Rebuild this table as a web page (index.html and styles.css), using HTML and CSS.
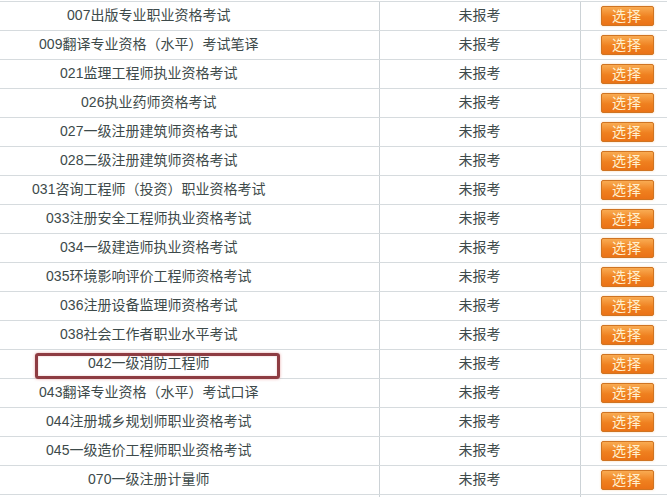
FILE: index.html
```html
<!DOCTYPE html>
<html lang="zh-CN">
<head>
<meta charset="utf-8">
<title>考试列表</title>
<link rel="stylesheet" href="styles.css">
</head>
<body>
<div class="viewport">
<table class="exam-table">
<colgroup><col class="c-name"><col class="c-status"><col class="c-act"></colgroup>
<tbody>
<tr><td>007出版专业职业资格考试</td><td>未报考</td><td><span class="btn">选择</span></td></tr>
<tr><td>009翻译专业资格（水平）考试笔译</td><td>未报考</td><td><span class="btn">选择</span></td></tr>
<tr><td>021监理工程师执业资格考试</td><td>未报考</td><td><span class="btn">选择</span></td></tr>
<tr><td>026执业药师资格考试</td><td>未报考</td><td><span class="btn">选择</span></td></tr>
<tr><td>027一级注册建筑师资格考试</td><td>未报考</td><td><span class="btn">选择</span></td></tr>
<tr><td>028二级注册建筑师资格考试</td><td>未报考</td><td><span class="btn">选择</span></td></tr>
<tr><td>031咨询工程师（投资）职业资格考试</td><td>未报考</td><td><span class="btn">选择</span></td></tr>
<tr><td>033注册安全工程师执业资格考试</td><td>未报考</td><td><span class="btn">选择</span></td></tr>
<tr><td>034一级建造师执业资格考试</td><td>未报考</td><td><span class="btn">选择</span></td></tr>
<tr><td>035环境影响评价工程师资格考试</td><td>未报考</td><td><span class="btn">选择</span></td></tr>
<tr><td>036注册设备监理师资格考试</td><td>未报考</td><td><span class="btn">选择</span></td></tr>
<tr><td>038社会工作者职业水平考试</td><td>未报考</td><td><span class="btn">选择</span></td></tr>
<tr><td class="marked">042一级消防工程师<span class="highlight"></span></td><td>未报考</td><td><span class="btn">选择</span></td></tr>
<tr><td>043翻译专业资格（水平）考试口译</td><td>未报考</td><td><span class="btn">选择</span></td></tr>
<tr><td>044注册城乡规划师职业资格考试</td><td>未报考</td><td><span class="btn">选择</span></td></tr>
<tr><td>045一级造价工程师职业资格考试</td><td>未报考</td><td><span class="btn">选择</span></td></tr>
<tr><td>070一级注册计量师</td><td>未报考</td><td><span class="btn">选择</span></td></tr>
<tr><td></td><td></td><td></td></tr>
</tbody>
</table>
</div>
</body>
</html>
```
FILE: styles.css
```css
html, body {
  margin: 0;
  padding: 0;
  background: #ffffff;
}
.viewport {
  width: 667px;
  height: 497px;
  overflow: hidden;
  padding-top: 1px;
  box-sizing: border-box;
}
.exam-table {
  margin-left: -81px;
  width: 770px;
  table-layout: fixed;
  border-collapse: collapse;
  font-family: "Liberation Sans", "Noto Sans CJK SC", sans-serif;
  font-size: 14px;
  color: #3d4a4a;
}
.c-name { width: 460px; }
.c-status { width: 201px; }
.c-act { width: 109px; }
.exam-table tr {
  height: 29px;
}
.exam-table td {
  padding: 0 0 3px 0;
  line-height: 16px;
  text-align: center;
  vertical-align: middle;
  border-top: 1px solid #d6dbde;
  border-bottom: 1px solid #d6dbde;
  white-space: nowrap;
}
.exam-table td + td {
  border-left: 1px solid #ccd2d6;
}
.exam-table td:last-child {
  text-align: left;
  padding: 0 0 1px 20px;
}
.btn {
  display: inline-block;
  box-sizing: border-box;
  width: 53px;
  height: 20px;
  line-height: 18px;
  text-align: center;
  vertical-align: middle;
  font-size: 14px;
  letter-spacing: 1px;
  color: #fff0cf;
  background: linear-gradient(#f9ab52, #ef801f 55%, #ea7216);
  border: 1px solid #cf7422;
  border-radius: 2px;
  box-shadow: 0 0 2px rgba(245, 160, 70, 0.5);
}
.marked {
  position: relative;
}
.highlight {
  position: absolute;
  left: 116px;
  top: 3px;
  width: 245px;
  height: 26px;
  box-sizing: border-box;
  border: 3px solid #8e3c42;
  border-radius: 3px;
  box-shadow: 0 0 3px rgba(210, 90, 90, 0.55), inset 0 0 2px rgba(210, 90, 90, 0.4);
}
```
